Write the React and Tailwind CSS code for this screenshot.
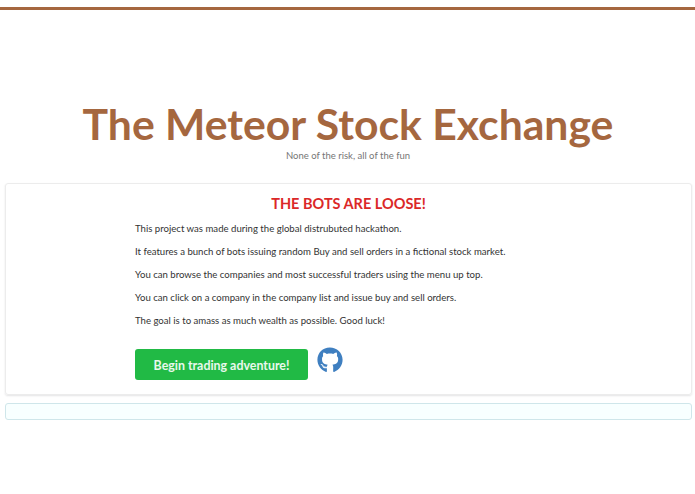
import { FaGithub } from 'react-icons/fa';

const lines = [
  'This project was made during the global distrubuted hackathon.',
  'It features a bunch of bots issuing random Buy and sell orders in a fictional stock market.',
  'You can browse the companies and most successful traders using the menu up top.',
  'You can click on a company in the company list and issue buy and sell orders.',
  'The goal is to amass as much wealth as possible. Good luck!',
];

export default function App() {
  return (
    <div className="min-h-[494px] bg-white font-['Lato',sans-serif] text-[#333333]">
      <div className="pt-[7px]">
        <div className="h-[3px] bg-[#a5673f]" />
      </div>

      {/* Header */}
      <div className="pt-[88px] pl-[1px] text-center">
        <h1 className="text-[42.7px] leading-[52px] font-bold text-[#a5673f]">The Meteor Stock Exchange</h1>
        <p className="-mt-[1px] text-[9.5px] leading-[14px] text-[#767676]">None of the risk, all of the fun</p>
      </div>

      {/* Content */}
      <div className="mt-[20px] mr-[3px] ml-[5px] flex flex-col gap-[8px]">
        <div className="h-[212px] rounded-[3px] border border-[#ececec] pt-[10px] shadow-[0_1px_2px_rgba(34,36,38,0.12)]">
          <h2 className="text-center text-[14.5px] leading-[20px] font-bold text-[#db2828]">THE BOTS ARE LOOSE!</h2>
          <div className="mt-[7px] ml-[129px]">
            <div className="flex flex-col gap-[8px]">
              {lines.map((line) => (
                <p key={line} className="text-[9.6px] leading-[15px] text-[#333333]">{line}</p>
              ))}
            </div>
            <div className="mt-[14px] flex items-start gap-[9px]">
              <button className="mt-[7px] h-[31px] w-[173px] rounded-[3px] bg-[#21ba45] pt-[3px] text-[12.4px] font-bold text-white/90">
                Begin trading adventure!
              </button>
              <FaGithub className="mt-[5px] text-[26px] text-[#3f7fc0]" />
            </div>
          </div>
        </div>

        <div className="h-[17px] rounded-[3px] border border-[#cfe6ea] bg-[#f8ffff]" />
      </div>
    </div>
  );
}
